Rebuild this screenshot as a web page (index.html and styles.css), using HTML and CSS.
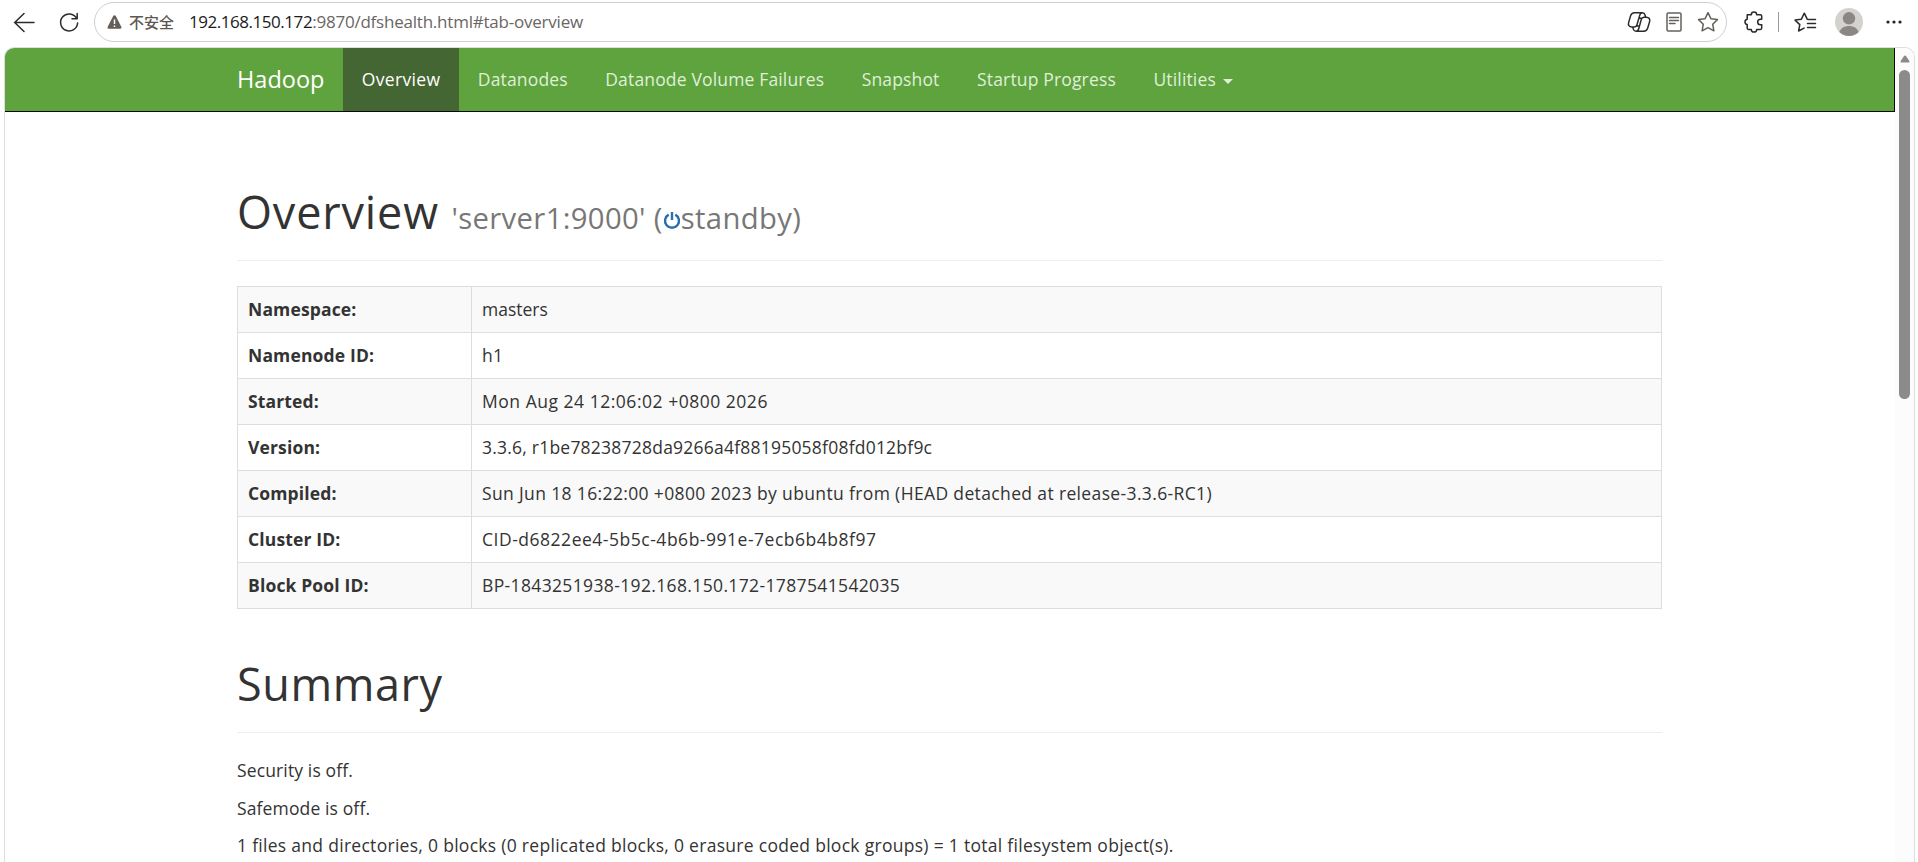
FILE: index.html
```
<!DOCTYPE html>
<html lang="en">
<head>
    <meta charset="UTF-8">
    <meta name="viewport" content="width=device-width, initial-scale=1.0">
    <title>Namenode information</title>
    <link rel="stylesheet" href="styles.css">
</head>
<body>
    <!-- Browser toolbar -->
    <header class="toolbar">
        <svg class="icon" width="22" height="22" viewBox="0 0 22 22"><path d="M21 11.5H1.5M11 2.5l-9.3 9 9.3 9"/></svg>
        <svg class="icon reload" width="22" height="22" viewBox="0 0 22 22"><path d="M18.5 7.2A8.5 8.5 0 1 0 19.6 12M19.2 2.5v5.2H14"/></svg>
        <div class="address-bar">
            <svg class="warning" width="15" height="14" viewBox="0 0 15 14"><path d="M7.5.3c.6 0 1 .3 1.300.8l5.500 10.600c.5 1-.1 2-1.200 2H1.900C.8 13.700.2 12.700.700 11.700L6.200 1.100C6.500.600 6.900.3 7.500.3z"/><path class="mark" d="M7.500 4.500v4.500M7.500 10.500v1.400"/></svg>
            <span class="insecure">不安全</span>
            <span class="url"><span class="host">192.168.150.172</span>:9870/dfshealth.html#tab-overview</span>
            <div class="address-icons">
                <svg class="icon" width="24" height="22" viewBox="0 0 24 22"><path d="M7.700 1.800h7.800c1.600 0 2.100.8 2.500 2.200l.7 2.300h.6c2.800 0 4 1.900 3.300 4.300l-1.800 6.200c-.7 2.500-1.800 3.500-4.100 3.500H9c-1.700 0-2.300-.8-2.700-2.200l-.6-2.200h-.8c-2.800 0-4-1.900-3.300-4.300l1.800-6.200c.7-2.500 1.800-3.600 4.300-3.600zM5.700 15.900h1.700c1.500 0 2.200-.7 2.600-2.100l2.600-9.200c.5-1.800 1.300-2.800 2.900-2.800M18.700 6.300h-1.800c-1.500 0-2.200.7-2.600 2.100l-2.500 9.100c-.5 1.800-1.300 2.800-2.800 2.800M11.800 7.300h3M9.600 15h3"/></svg>
                <svg class="icon muted" width="16" height="20" viewBox="0 0 16 20"><rect x="1" y="1" width="14" height="18" rx="1.200"/><path d="M3.500 5.500h9M3.500 8.500h9M3.500 11.500h5.500"/></svg>
                <svg class="icon muted" width="22" height="22" viewBox="0 0 22 22"><path d="M11 1.700l2.900 6 6.500.9-4.700 4.600 1.200 6.600-5.900-3.100-5.900 3.100 1.200-6.600-4.700-4.600 6.500-.9z"/></svg>
            </div>
        </div>
        <svg class="icon puzzle" width="20" height="22" viewBox="0 0 20 22"><path d="M3.200 3.700h4.100a2.700 2.700 0 0 1 5.400 0h3.700c.8 0 1.300.5 1.300 1.300v3.200h-1.200a2.800 2.800 0 0 0 0 5.600h1.200v3.300c0 .8-.5 1.300-1.300 1.300h-3.700a2.700 2.700 0 0 1-5.400 0H4.500c-.8 0-1.300-.5-1.300-1.300v-3.500a2.700 2.700 0 0 1 0-5.300z"/></svg>
        <span class="divider"></span>
        <svg class="icon favorites" width="23" height="22" viewBox="0 0 23 22"><path d="M14.500 8.400l-1.300-.2-2.900-6-2.900 6-6.300.9 4.700 4.500-1.200 6.400 5.500-2.900M14.500 8.400h7M13.500 12.500h8M13.500 16.500h8"/></svg>
        <svg class="avatar" width="28" height="28" viewBox="0 0 28 28"><circle cx="14" cy="14" r="14" fill="#d4d2cf"/><circle cx="14" cy="10.300" r="6.200" fill="#8b8785"/><path d="M4.300 24.100C5.800 20 9.500 18 14 18s8.200 2 9.700 6.100A14 14 0 0 1 14 28a14 14 0 0 1-9.700-3.900z" fill="#8b8785"/></svg>
        <svg class="more" width="16" height="4" viewBox="0 0 16 4"><circle cx="2" cy="2" r="1.600"/><circle cx="8" cy="2" r="1.600"/><circle cx="14" cy="2" r="1.600"/></svg>
    </header>

    <div class="window">
        <div class="page">
            <nav class="navbar">
                <a class="brand">Hadoop</a>
                <a class="tab active">Overview</a>
                <a class="tab">Datanodes</a>
                <a class="tab">Datanode Volume Failures</a>
                <a class="tab">Snapshot</a>
                <a class="tab">Startup Progress</a>
                <a class="tab">Utilities <span class="caret"></span></a>
            </nav>

            <main class="container">
                <h1 class="page-header">Overview <small>'server1:9000' (<svg class="standby" width="18" height="18" viewBox="0 0 18 18"><path d="M5.700 3.600a7 7 0 1 0 6.600 0M9 1v8"/></svg>standby)</small></h1>

                <table class="info">
                    <tr><th>Namespace:</th><td class="short">masters</td></tr>
                    <tr><th>Namenode ID:</th><td>h1</td></tr>
                    <tr><th>Started:</th><td class="wide">Mon Aug 24 12:06:02 +0800 2026</td></tr>
                    <tr><th>Version:</th><td class="narrow">3.3.6, r1be78238728da9266a4f88195058f08fd012bf9c</td></tr>
                    <tr><th>Compiled:</th><td>Sun Jun 18 16:22:00 +0800 2023 by ubuntu from (HEAD detached at release-3.3.6-RC1)</td></tr>
                    <tr><th>Cluster ID:</th><td class="wide">CID-d6822ee4-5b5c-4b6b-991e-7ecb6b4b8f97</td></tr>
                    <tr><th>Block Pool ID:</th><td>BP-1843251938-192.168.150.172-1787541542035</td></tr>
                </table>

                <h1 class="page-header summary">Summary</h1>
                <p>Security is off.</p>
                <p>Safemode is off.</p>
                <p class="files">1 files and directories, 0 blocks (0 replicated blocks, 0 erasure coded block groups) = 1 total filesystem object(s).</p>
            </main>
        </div>

        <div class="scrollbar">
            <svg width="10" height="8" viewBox="0 0 10 8"><path d="M5 .5c.5 0 .8.3 1 .6l3.300 4.900c.5.800 0 1.500-.8 1.500h-7C.700 7.500.200 6.800.700 6L4 1.100c.2-.3.5-.6 1-.6z"/></svg>
            <div class="thumb"></div>
        </div>
    </div>
</body>
</html>
```
FILE: styles.css
```
* { box-sizing: border-box; }
body {
    margin: 0;
    height: 862px;
    overflow: hidden;
    display: flex;
    flex-direction: column;
    background-color: #fff;
    color: #333;
    font-family: "Open Sans", "Noto Sans CJK SC", sans-serif;
    font-size: 17.5px;
    line-height: 25px;
}

/* Browser toolbar */
.toolbar { display: flex; align-items: center; height: 47px; padding: 0 15px 3px 13px; flex-shrink: 0; }
.icon { fill: none; stroke: #2b2b2b; stroke-width: 1.5; stroke-linejoin: round; stroke-linecap: round; flex-shrink: 0; }
.icon.muted { stroke: #66605b; }
.reload { margin-left: 23px; }
.address-bar {
    display: flex;
    align-items: center;
    width: 1633px;
    height: 40px;
    margin-left: 14px;
    padding: 0 7px 0 12px;
    border: 1px solid #cfcfcf;
    border-radius: 20px;
    flex-shrink: 0;
}
.warning { fill: #665e58; }
.warning .mark { stroke: #fff; stroke-width: 1.5; }
.insecure { margin-left: 7px; width: 60px; font: 500 15px/20px "Noto Sans CJK SC", sans-serif; color: #5f5751; white-space: nowrap; }
.url { padding-bottom: 1px; font-size: 17px; letter-spacing: -0.22px; color: #6a6663; }
.host { letter-spacing: -0.46px; color: #1b1b1b; }
.address-icons { display: flex; align-items: center; gap: 15px; margin-left: auto; }
.puzzle { margin-left: 17px; }
.divider { width: 1px; height: 20px; margin-left: 14px; background-color: #999; }
.favorites { margin-left: 15px; }
.avatar { margin-left: 18px; flex-shrink: 0; }
.more { margin-left: 23px; fill: #222; flex-shrink: 0; }

/* Page frame */
.window {
    display: flex;
    flex: 1;
    margin: 0 3px 0 4px;
    border: 1px solid #dedede;
    border-bottom: none;
    border-radius: 10px 10px 0 0;
    overflow: hidden;
}
.page { flex: 1; overflow: hidden; }
.scrollbar { display: flex; flex-direction: column; align-items: center; width: 19px; padding-top: 7px; background-color: #fcfcfc; flex-shrink: 0; }
.scrollbar svg { fill: #8a8a8a; }
.thumb { width: 11px; height: 329px; margin-top: 7px; border-radius: 6px; background-color: #8b8b8b; }

/* Navbar */
.navbar {
    display: flex;
    height: 64px;
    padding-left: 232px;
    background-color: #5fa33e;
    border-right: 1px solid #080808;
    border-bottom: 1px solid #080808;
}
.brand { width: 106px; padding-top: 19px; font-size: 23.5px; color: #fff; }
.tab { padding: 19px 18.75px; letter-spacing: 0.16px; color: #dff0d8; white-space: nowrap; }
.tab.active { background-color: #446633; color: #fff; letter-spacing: 0.33px; }
.caret { display: inline-block; margin-left: 2px; vertical-align: middle; border-top: 5px solid; border-left: 5px solid transparent; border-right: 5px solid transparent; }

/* Content */
.container { width: 1425px; margin-left: 232px; }
.page-header { margin: 75px 0 25px; padding-bottom: 23px; border-bottom: 1px solid #eee; font-size: 45px; font-weight: 400; line-height: 50px; letter-spacing: 0.85px; }
.page-header small { font-size: 29.25px; letter-spacing: 0.35px; line-height: 1; color: #777; }
.standby { fill: none; stroke: #2a6fb0; stroke-width: 2.4; vertical-align: 0; }
.page-header.summary { margin-top: 50px; letter-spacing: 0.6px; }

.info { width: 100%; border-collapse: collapse; table-layout: fixed; letter-spacing: 0.36px; }
.info th, .info td { height: 46px; padding: 10px; border: 1px solid #ddd; text-align: left; }
.info th { width: 234px; font-weight: 700; letter-spacing: 0.15px; }
.info tr:nth-child(odd) { background-color: #f9f9f9; }
.info .wide { letter-spacing: 0.52px; }
.info .narrow { letter-spacing: 0.22px; }
.info .short { letter-spacing: 0; }

p { margin: 0 0 12.5px; letter-spacing: 0.13px; }
.files { letter-spacing: 0.29px; }
```
